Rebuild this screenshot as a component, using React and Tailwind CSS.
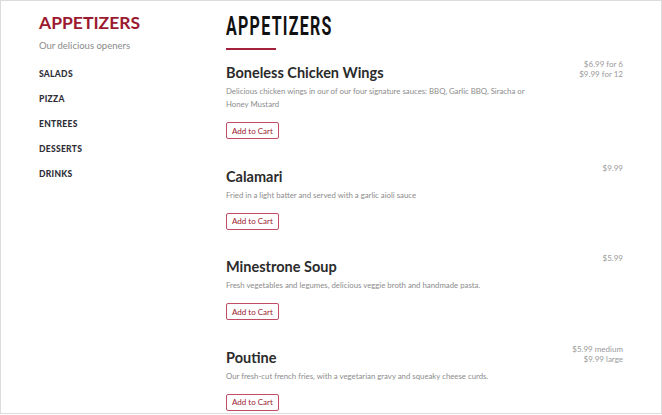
import React from "react";

const items = [
  {
    name: "Boneless Chicken Wings",
    desc: ["Delicious chicken wings in our of our four signature sauces: BBQ, Garlic BBQ, Siracha or", "Honey Mustard"],
    price: ["$6.99 for 6", "$9.99 for 12"],
  },
  {
    name: "Calamari",
    desc: ["Fried in a light batter and served with a garlic aioli sauce"],
    price: ["$9.99"],
  },
  {
    name: "Minestrone Soup",
    desc: ["Fresh vegetables and legumes, delicious veggie broth and handmade pasta."],
    price: ["$5.99"],
  },
  {
    name: "Poutine",
    desc: ["Our fresh-cut french fries, with a vegetarian gravy and squeaky cheese curds."],
    price: ["$5.99 medium", "$9.99 large"],
  },
];

const nav = ["SALADS", "PIZZA", "ENTREES", "DESSERTS", "DRINKS"];

export default function App() {
  return (
    <div
      className="w-[662px] h-[414px] border border-[#dcdcdc] bg-white flex overflow-hidden"
      style={{ fontFamily: "Lato, 'Open Sans', sans-serif" }}
    >
      <aside className="w-[225px] shrink-0 pl-[38px] pt-[11px]">
        <h2 className="text-[17.5px] leading-[22px] font-bold text-[#9c1a30]">APPETIZERS</h2>
        <p className="mt-[6px] text-[9.5px] leading-[12px] text-[#8a8a8a]">Our delicious openers</p>
        <ul className="mt-[10px] flex flex-col">
          {nav.map((n) => (
            <li key={n} className="h-[25px] flex items-center text-[8.5px] font-black text-[#2e2e36] tracking-[0.3px]">
              {n}
            </li>
          ))}
        </ul>
      </aside>
      <main className="flex-1 pr-[38px] pt-[11px]">
        <h1
          className="inline-block origin-left scale-x-[0.64] text-[25px] leading-[30px] font-bold text-[#111] tracking-[2px] whitespace-nowrap"
          style={{ fontFamily: "Roboto, sans-serif" }}
        >
          APPETIZERS
        </h1>
        <div className="mt-[6px] w-[50px] h-[2px] bg-[#a3213a]" />
        <div className="mt-[9px] flex flex-col gap-[23px]">
          {items.map((it) => (
            <div key={it.name} className="flex justify-between">
              <div>
                <h3 className="mt-[4px] text-[14.5px] leading-[20px] font-bold text-[#2b2b2b]">{it.name}</h3>
                <p className="mt-[2px] text-[7.8px] leading-[13px] text-[#8c8c8c]">
                  {it.desc.map((d, i) => (
                    <React.Fragment key={i}>
                      {i > 0 && <br />}
                      {d}
                    </React.Fragment>
                  ))}
                </p>
                <button className="mt-[11px] h-[17px] px-[5px] border border-[#c24c63] rounded-[2px] text-[8px] leading-none text-[#9c1a30] bg-white">
                  Add to Cart
                </button>
              </div>
              <div className="text-right text-[8px] leading-[10px] text-[#9a9a9a]">
                {it.price.map((p) => (
                  <div key={p}>{p}</div>
                ))}
              </div>
            </div>
          ))}
        </div>
      </main>
    </div>
  );
}
